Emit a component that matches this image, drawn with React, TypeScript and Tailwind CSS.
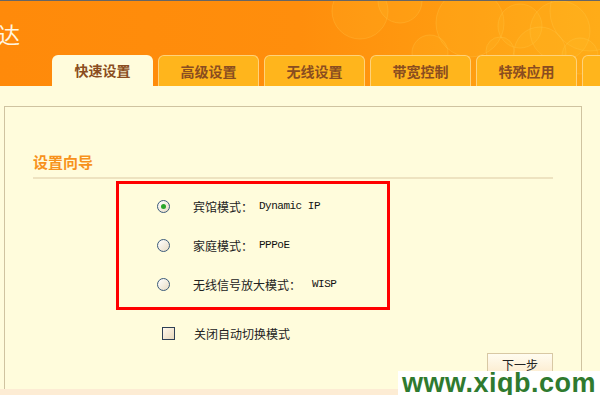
const tabs = ['快速设置', '高级设置', '无线设置', '带宽控制', '特殊应用', ''];

const bubbles = [
  { cx: 360, cy: 10, r: 28 },
  { cx: 470, cy: 22, r: 34 },
  { cx: 520, cy: 25, r: 22 },
  { cx: 560, cy: 30, r: 30 },
  { cx: 590, cy: 10, r: 40 },
  { cx: 430, cy: 52, r: 18 },
  { cx: 500, cy: 50, r: 14 },
  { cx: 540, cy: 52, r: 26 },
  { cx: 400, cy: 0, r: 22 },
  { cx: 580, cy: 55, r: 18 },
];

function Radio({ checked }: { checked?: boolean }) {
  return (
    <span className="w-[13px] h-[13px] shrink-0 rounded-full border border-[#3b5a7a] bg-gradient-to-br from-[#ffffff] to-[#e8dcc4] flex items-center justify-center">
      {checked && <span className="w-[5px] h-[5px] rounded-full bg-[#2aa52a]" />}
    </span>
  );
}

export default function App() {
  return (
    <div className="w-[600px] h-[395px] overflow-hidden bg-[#fffcdc] relative" style={{ fontFamily: '"Noto Sans CJK SC", "Liberation Sans", sans-serif' }}>
      <header className="relative h-[86px] border-t border-[#666] bg-gradient-to-r from-[#ff8a0a] via-[#ff8e0c] to-[#ffa814] flex flex-col">
        <svg className="absolute inset-0 w-[600px] h-[85px]" viewBox="0 0 600 85">
          {bubbles.map((b, i) => (
            <circle key={i} cx={b.cx} cy={b.cy} r={b.r} fill="#ffc830" fillOpacity="0.14" stroke="#ffd860" strokeOpacity="0.22" />
          ))}
        </svg>
        <div className="relative h-[54px] flex items-center pt-[10px]">
          <span className="text-[22px] leading-none text-[#fff6e0] -ml-[2px]">达</span>
        </div>
        <nav className="relative flex h-[31px] pl-[52px] gap-[5px]">
          {tabs.map((t, i) => (
            <div
              key={i}
              className={`w-[101px] shrink-0 rounded-t-[6px] flex items-center justify-center text-[14px] font-bold text-[#8a4d20] ${
                i === 0 ? 'bg-[#fffcdc]' : 'bg-[#ffb51c] border border-b-0 border-[#ffd27a]'
              }`}
            >
              {t}
            </div>
          ))}
        </nav>
      </header>

      <div className="ml-[4px] mt-[20px] w-[578px] h-[300px] border border-b-0 border-[#cfc3a0] pl-[28px] pt-[44px]">
        <h2 className="text-[15px] font-bold text-[#f7921c] leading-[22px] pb-[4px] w-[520px] border-b-2 border-[#eee3c0]">设置向导</h2>
        <div className="ml-[83px] mt-[2px] w-[274px] h-[129px] border-[3px] border-[#ff0000] pl-[38px] pt-[16px] flex flex-col gap-[26px] text-[12px] text-[#222]">
          <label className="flex items-center h-[13px]">
            <Radio checked />
            <span className="ml-[23px]">宾馆模式：</span>
            <span className="ml-[6px] font-['Liberation_Mono'] text-[11px] tracking-[-0.5px] text-[#111]">Dynamic IP</span>
          </label>
          <label className="flex items-center h-[13px]">
            <Radio />
            <span className="ml-[23px]">家庭模式：</span>
            <span className="ml-[6px] font-['Liberation_Mono'] text-[11px] tracking-[-0.5px] text-[#111]">PPPoE</span>
          </label>
          <label className="flex items-center h-[13px]">
            <Radio />
            <span className="ml-[23px]">无线信号放大模式：</span>
            <span className="ml-[11px] font-['Liberation_Mono'] text-[11px] tracking-[-0.5px] text-[#111]">WISP</span>
          </label>
        </div>
        <label className="ml-[129px] mt-[17px] h-[13px] flex items-center text-[12px] text-[#222]">
          <span className="w-[13px] h-[13px] shrink-0 border border-[#2e3f55] bg-gradient-to-br from-[#fff8ec] to-[#e8d8bc]" />
          <span className="ml-[19px]">关闭自动切换模式</span>
        </label>
        <div className="flex w-[520px] justify-end mt-[13px]">
          <button className="w-[66px] h-[26px] border border-[#d8c8a4] bg-gradient-to-b from-[#fffcf0] to-[#fbe8c8] text-[12px] leading-none text-[#222] pb-[2px]">下一步</button>
        </div>
      </div>

      <div className="absolute left-0 bottom-0 w-[600px] h-[6px] bg-[#fdecd4]" />
      <div className="absolute right-0 bottom-0 w-[202px] h-[24px] bg-white flex items-center justify-center">
        <span className="text-[27px] font-bold text-[#2f7a2f] leading-none tracking-[0.5px]" style={{ fontFamily: '"Liberation Sans", sans-serif' }}>www.xiqb.com</span>
      </div>
    </div>
  );
}
